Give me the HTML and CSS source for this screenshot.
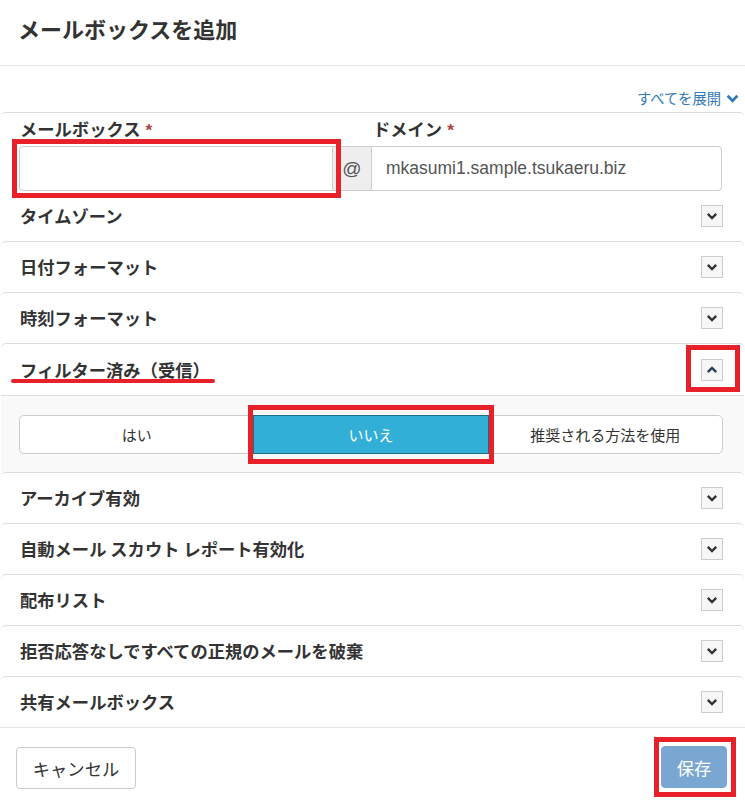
FILE: index.html
```html
<!DOCTYPE html>
<html lang="ja">
<head>
<meta charset="utf-8">
<title>メールボックスを追加</title>
<link rel="stylesheet" href="styles.css">
</head>
<body>
<div class="modal">
  <div class="modal-header">
    <h4 class="modal-title">メールボックスを追加</h4>
  </div>
  <div class="modal-body">
    <div class="expand-row">
      <a class="expand-link">すべてを展開
        <svg class="expand-icon" viewBox="0 0 12 12" width="13" height="13"><path d="M1.5 3.5 L6 8 L10.5 3.5" fill="none" stroke="#337ab7" stroke-width="2.6"/></svg>
      </a>
    </div>
    <div class="panel-group">
      <div class="panel">
        <div class="addr-grid">
          <label class="field-label lbl-mailbox">メールボックス<span class="req">*</span></label>
          <label class="field-label lbl-domain">ドメイン<span class="req">*</span></label>
          <input class="form-control mailbox-input" type="text">
          <span class="addon">@</span>
          <input class="form-control domain-input" type="text" value="mkasumi1.sample.tsukaeru.biz" readonly>
        </div>
        <div class="row row-tz">
          <span class="row-title">タイムゾーン</span>
          <span class="toggle"><svg viewBox="0 0 12 12" width="12" height="12"><path d="M1.8 3.8 L6 8 L10.2 3.8" fill="none" stroke="#333" stroke-width="2.4"/></svg></span>
        </div>
      </div>
      <div class="panel row">
        <span class="row-title">日付フォーマット</span>
        <span class="toggle"><svg viewBox="0 0 12 12" width="12" height="12"><path d="M1.8 3.8 L6 8 L10.2 3.8" fill="none" stroke="#333" stroke-width="2.4"/></svg></span>
      </div>
      <div class="panel row">
        <span class="row-title">時刻フォーマット</span>
        <span class="toggle"><svg viewBox="0 0 12 12" width="12" height="12"><path d="M1.8 3.8 L6 8 L10.2 3.8" fill="none" stroke="#333" stroke-width="2.4"/></svg></span>
      </div>
      <div class="panel">
        <div class="row">
          <span class="row-title">フィルター済み（受信）</span>
          <span class="toggle"><svg viewBox="0 0 12 12" width="12" height="12"><path d="M1.8 8.2 L6 4 L10.2 8.2" fill="none" stroke="#2b3f55" stroke-width="2.4"/></svg></span>
        </div>
        <div class="panel-body">
          <div class="btn-group">
            <button class="btn-opt">はい</button>
            <button class="btn-opt active">いいえ</button>
            <button class="btn-opt">推奨される方法を使用</button>
          </div>
        </div>
      </div>
      <div class="panel row">
        <span class="row-title">アーカイブ有効</span>
        <span class="toggle"><svg viewBox="0 0 12 12" width="12" height="12"><path d="M1.8 3.8 L6 8 L10.2 3.8" fill="none" stroke="#333" stroke-width="2.4"/></svg></span>
      </div>
      <div class="panel row">
        <span class="row-title">自動メール スカウト レポート有効化</span>
        <span class="toggle"><svg viewBox="0 0 12 12" width="12" height="12"><path d="M1.8 3.8 L6 8 L10.2 3.8" fill="none" stroke="#333" stroke-width="2.4"/></svg></span>
      </div>
      <div class="panel row">
        <span class="row-title">配布リスト</span>
        <span class="toggle"><svg viewBox="0 0 12 12" width="12" height="12"><path d="M1.8 3.8 L6 8 L10.2 3.8" fill="none" stroke="#333" stroke-width="2.4"/></svg></span>
      </div>
      <div class="panel row">
        <span class="row-title">拒否応答なしですべての正規のメールを破棄</span>
        <span class="toggle"><svg viewBox="0 0 12 12" width="12" height="12"><path d="M1.8 3.8 L6 8 L10.2 3.8" fill="none" stroke="#333" stroke-width="2.4"/></svg></span>
      </div>
      <div class="panel row">
        <span class="row-title">共有メールボックス</span>
        <span class="toggle"><svg viewBox="0 0 12 12" width="12" height="12"><path d="M1.8 3.8 L6 8 L10.2 3.8" fill="none" stroke="#333" stroke-width="2.4"/></svg></span>
      </div>
    </div>
  </div>
  <div class="modal-footer">
    <button class="btn btn-default">キャンセル</button>
    <button class="btn btn-primary" disabled>保存</button>
  </div>

  <div class="mark mark-mailbox"></div>
  <div class="mark-line"></div>
  <div class="mark mark-toggle"></div>
  <div class="mark mark-no"></div>
  <div class="mark mark-save"></div>
</div>
</body>
</html>
```

FILE: styles.css
```css
* { box-sizing: border-box; }
html, body { margin: 0; padding: 0; background: #fff; }
body {
  font-family: "Liberation Sans", "Noto Sans CJK JP", sans-serif;
  color: #333;
  width: 745px;
  height: 802px;
  overflow: hidden;
}
.modal { position: relative; width: 745px; height: 802px; }

.modal-header {
  height: 66px;
  border-bottom: 1px solid #e5e5e5;
  padding: 13px 18px 0;
}
.modal-title {
  margin: 0;
  font-family: "Noto Sans CJK JP", sans-serif;
  font-size: 22px;
  font-weight: 700;
  line-height: 30px;
  color: #333;
}

.modal-body { padding: 0; }
.expand-row {
  height: 46px;
  display: flex;
  justify-content: flex-end;
  align-items: flex-end;
  padding: 0 6px 4px 0;
}
.expand-link {
  font-family: "Noto Sans CJK JP", sans-serif;
  font-size: 14.3px;
  color: #337ab7;
  line-height: 20px;
  display: flex;
  align-items: center;
  gap: 5px;
}
.expand-icon { display: block; }

.panel-group { margin: 0 1px; }
.panel {
  border-top: 1px solid #ddd;
  border-radius: 5px 5px 0 0;
}
.row {
  height: 51px;
  display: flex;
  align-items: center;
  justify-content: space-between;
  padding: 0 21px 0 19px;
}
.row-title {
  font-family: "Noto Sans CJK JP", sans-serif;
  font-size: 17.3px;
  font-weight: 700;
  color: #333;
  line-height: 22px;
}
.toggle {
  width: 22px;
  height: 22px;
  border: 1px solid #ccc;
  background: #f7f7f7;
  display: flex;
  align-items: center;
  justify-content: center;
}
.toggle svg { display: block; }

.addr-grid {
  display: grid;
  grid-template-columns: 314px 38px 351px;
  grid-template-rows: 33px 45px;
  padding: 0 0 0 18px;
}
.field-label {
  font-family: "Noto Sans CJK JP", sans-serif;
  font-size: 17.3px;
  font-weight: 700;
  color: #333;
  line-height: 22px;
  align-self: center;
}
.lbl-mailbox { grid-column: 1; grid-row: 1; padding-left: 1px; }
.lbl-domain { grid-column: 3; grid-row: 1; padding-left: 2px; }
.req { color: #a94442; margin-left: 5px; font-weight: 700; font-family: "Liberation Sans", sans-serif; }
.form-control {
  height: 45px;
  border: 1px solid #ccc;
  background: #fff;
  font-family: "Liberation Sans", "Noto Sans CJK JP", sans-serif;
  font-size: 17.5px;
  color: #555;
  padding: 0 14px;
  margin: 0;
  outline: none;
  width: 100%;
}
.mailbox-input { grid-column: 1; grid-row: 2; border-radius: 4px 0 0 4px; }
.addon {
  grid-column: 2; grid-row: 2;
  background: #eee;
  border-top: 1px solid #ccc;
  border-bottom: 1px solid #ccc;
  display: flex;
  align-items: center;
  justify-content: center;
  font-size: 19px;
  color: #555;
}
.domain-input { grid-column: 3; grid-row: 2; border-radius: 0 4px 4px 0; }
.row-tz { height: 50px; padding-top: 0; }

.panel-body {
  border-top: 1px solid #ddd;
  background: #f9f9f9;
  height: 77px;
  padding: 19px 21px 0 18px;
}
.btn-group { display: flex; }
.btn-opt {
  flex: 1 1 0;
  height: 39px;
  border: 1px solid #ccc;
  background: #fff;
  font-family: "Noto Sans CJK JP", sans-serif;
  font-size: 15px;
  color: #333;
  margin: 0;
  margin-left: -1px;
  padding: 0;
}
.btn-opt:first-child { border-radius: 5px 0 0 5px; margin-left: 0; }
.btn-opt:last-child { border-radius: 0 5px 5px 0; }
.btn-opt.active {
  background: #31afd6;
  border-color: #1f6a80;
  color: #fff;
  position: relative;
}

.modal-footer {
  position: absolute;
  left: 0; right: 0; top: 727px;
  border-top: 1px solid #e5e5e5;
  height: 75px;
  display: flex;
  justify-content: space-between;
  align-items: flex-start;
  padding: 19px 18px 0 16px;
}
.btn {
  height: 42px;
  border-radius: 4px;
  font-family: "Noto Sans CJK JP", sans-serif;
  font-size: 17.3px;
  padding: 0;
  margin: 0;
}
.btn-default {
  width: 120px;
  background: #fff;
  border: 1px solid #ccc;
  color: #333;
}
.btn-primary {
  width: 66px;
  background: #7aa7d1;
  border: 1px solid #7aa7d1;
  color: #fff;
  margin-top: -1px;
}

.mark {
  position: absolute;
  border: 5px solid #e8202a;
  pointer-events: none;
}
.mark-mailbox { left: 12px; top: 139px; width: 329px; height: 59px; }
.mark-toggle { left: 686px; top: 345px; width: 54px; height: 47px; }
.mark-no { left: 248px; top: 405px; width: 246px; height: 59px; }
.mark-save { left: 654px; top: 737px; width: 82px; height: 60px; }
.mark-line {
  position: absolute;
  left: 11px; top: 379px;
  width: 204px; height: 4px;
  background: #e8202a;
  border-radius: 2px;
}
```
